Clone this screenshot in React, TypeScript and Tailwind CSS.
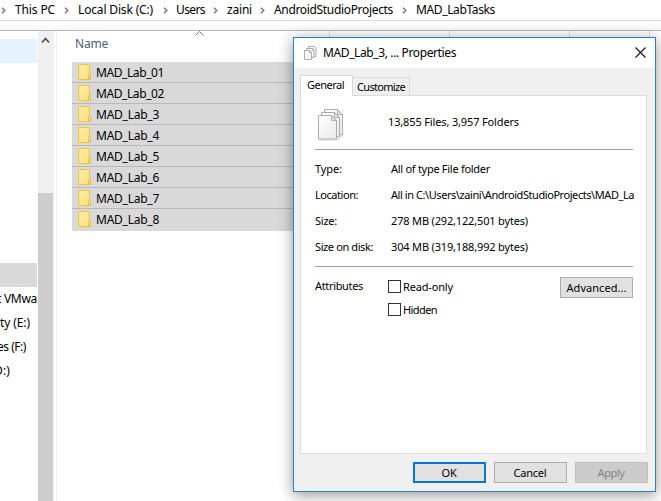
import { useLayoutEffect, useRef, useState } from 'react';

/* Single line of text whose letter spacing is adjusted to fill the given width. */
function Fit({ text, width, className = '' }: { text: string; width: number; className?: string }) {
  const ref = useRef<HTMLSpanElement>(null);
  const [spacing, setSpacing] = useState(0);
  useLayoutEffect(() => {
    if (ref.current) {
      const natural = ref.current.getBoundingClientRect().width;
      setSpacing((width - natural) / text.length);
    }
  }, [text, width]);
  return (
    <span ref={ref} className={`inline-block shrink-0 whitespace-pre ${className}`} style={{ letterSpacing: `${spacing}px` }}>
      {text}
    </span>
  );
}

function Crumb({ text, width, gap }: { text: string; width: number; gap: string }) {
  return (
    <div className={`flex shrink-0 items-center ${gap}`}>
      <svg width="5" height="7" viewBox="0 0 5 7" className="mt-px shrink-0" fill="none" stroke="#777" strokeWidth="1.4">
        <path d="M1 .7 3.8 3.5 1 6.3" />
      </svg>
      <Fit text={text} width={width} />
    </div>
  );
}

function Folder() {
  return (
    <svg width="14" height="16" viewBox="0 0 14 16" className="shrink-0">
      <defs>
        <linearGradient id="fold" x1="0" y1="0" x2="1" y2="1">
          <stop offset="0" stopColor="#ffeca6" />
          <stop offset="1" stopColor="#ffdf80" />
        </linearGradient>
      </defs>
      <path d="M.5.5h11v9h1v6H.5z" fill="url(#fold)" stroke="#edc541" />
      <path d="M10.500 15V10.500l1-1h1v5.500z" fill="#ffe79a" stroke="#e7bb38" />
    </svg>
  );
}

function SmallPages() {
  return (
    <svg width="13" height="14" viewBox="0 0 13 14" fill="#fafafa" stroke="#a3a3a3" strokeWidth=".9" className="mb-px shrink-0">
      <path d="M4.500.5h6l1.500 1.500v8.500h-7.500z" />
      <path d="M2.500 2.500h6l1.500 1.500v7.500H2.500z" />
      <path d="M.5 4.500h5l2 2v7h-7z" />
      <path d="M5.500 4.500v2h2M8.500 2.500v1.500h1.500" fill="none" />
    </svg>
  );
}

function Pages() {
  return (
    <svg width="26" height="32" viewBox="0 0 26 32" className="mt-[4px] shrink-0 overflow-visible">
      <defs>
        <linearGradient id="sheet" x1="0" y1="0" x2="1" y2="1">
          <stop offset="0" stopColor="#fff" />
          <stop offset="1" stopColor="#e9e9e9" />
        </linearGradient>
      </defs>
      <path d="M1 31h18l3.500-3 2.500-3" fill="none" stroke="#dedede" strokeWidth="1.500" />
      <g fill="url(#sheet)" stroke="#adadad">
        <path d="M6.500.5h13l5 5v20h-18z" />
        <path d="M3.500 3.500h13l5 5v19h-18z" />
        <path d="M.5 6.500h13l5 5v18.500H.5z" />
      </g>
      <path d="M19.500.5v5h5zM16.500 3.500v5h5zM13.500 6.500v5h5z" fill="#dedede" stroke="#a5a5a5" strokeWidth=".8" />
    </svg>
  );
}

const folders = ['MAD_Lab_01', 'MAD_Lab_02', 'MAD_Lab_3', 'MAD_Lab_4', 'MAD_Lab_5', 'MAD_Lab_6', 'MAD_Lab_7', 'MAD_Lab_8'];

const details: [string, number, string, number][] = [
  ['Type:', 27, 'All of type File folder', 99],
  ['Location:', 43, 'All in C:\\Users\\zaini\\AndroidStudioProjects\\MAD_La', 243],
  ['Size:', 22, '278 MB (292,122,501 bytes)', 137],
  ['Size on disk:', 58, '304 MB (319,188,992 bytes)', 137],
];

function Check({ label, width }: { label: string; width: number }) {
  return (
    <label className="flex h-[23px] items-center gap-[2px]">
      <span className="size-[13px] border border-[#333] bg-white" />
      <Fit text={label} width={width} />
    </label>
  );
}

function Properties() {
  return (
    <section className="absolute left-[293px] top-[37px] flex h-[455px] w-[363px] flex-col border border-[#2b7fc4] bg-[#f0f0f0] font-['Noto_Sans',sans-serif] text-[11px] leading-[15px] shadow-[0_3px_14px_rgba(0,0,0,0.42)]">
      <header className="flex h-[30px] shrink-0 items-center bg-white pl-[10px] pr-[9px] text-[12px]">
        <SmallPages />
        <Fit text="MAD_Lab_3, ... Properties" width={133} className="mb-px ml-[6px]" />
        <svg width="11" height="11" viewBox="0 0 11 11" className="mb-[2px] ml-auto" stroke="#111" strokeWidth="1.100">
          <path d="m.5.5 10 10M10.500.5l-10 10" />
        </svg>
      </header>
      <div className="mt-[7px] flex h-5 shrink-0 items-end pl-[6px]">
        <div className="z-10 -mb-px flex h-[21px] w-[53px] shrink-0 items-center border border-b-0 border-[#d9d9d9] bg-white pb-[3px] pl-[6px]">
          <Fit text="General" width={37} />
        </div>
        <div className="flex h-[18px] w-[57px] items-center border border-b-0 border-l-0 border-[#d9d9d9] pl-[4px]">
          <Fit text="Customize" width={48} />
        </div>
      </div>
      <div className="ml-[6px] flex h-[359px] w-[347px] shrink-0 flex-col border border-[#dcdcdc] bg-white pl-[14px] pr-[13px]">
        <div className="flex h-[54px] shrink-0 items-center border-b border-[#a0a0a0] pl-[3px]">
          <Pages />
          <Fit text="13,855 Files, 3,957 Folders" width={131} className="mb-[2px] ml-[44px]" />
        </div>
        <div className="flex h-[117px] shrink-0 flex-col border-b border-[#a0a0a0] pt-[5px]">
          {details.map(([label, lw, value, vw]) => (
            <div key={label} className="flex h-[26px] items-center">
              <div className="w-[76px] shrink-0"><Fit text={label} width={lw} /></div>
              <Fit text={value} width={vw} />
            </div>
          ))}
        </div>
        <div className="flex pt-[8px]">
          <div className="w-[73px] pt-[3px]"><Fit text="Attributes" width={48} /></div>
          <div>
            <Check label="Read-only" width={50} />
            <Check label="Hidden" width={34} />
          </div>
          <button className="ml-auto mt-[2px] flex h-[21px] w-[73px] items-center justify-center border border-[#adadad] bg-[#e1e1e1]">
            <Fit text="Advanced..." width={60} />
          </button>
        </div>
      </div>
      <footer className="flex gap-2 pl-[119px] pt-[8px]">
        <button className="flex h-[21px] w-[73px] items-center justify-center border-2 border-[#0078d7] bg-[#e1e1e1] pr-px"><Fit text="OK" width={15} /></button>
        <button className="flex h-[21px] w-[73px] items-center justify-center border border-[#adadad] bg-[#e1e1e1] pr-px"><Fit text="Cancel" width={33} /></button>
        <button className="flex h-[21px] w-[73px] items-center justify-center border border-[#bfbfbf] bg-[#ccc] pr-px text-[#838383]"><Fit text="Apply" width={27} /></button>
      </footer>
    </section>
  );
}

export default function App() {
  return (
    <main className="relative flex h-[501px] w-[661px] flex-col overflow-hidden bg-white font-['Noto_Sans',sans-serif] text-[12px] leading-4 text-black">
      <nav className="flex h-[21px] shrink-0 items-center border-b border-[#d9d9d9] pl-px">
        <Crumb text="This PC" width={40} gap="gap-[9px] mr-[9px]" />
        <Crumb text="Local Disk (C:)" width={75} gap="gap-[9px] mr-[10px]" />
        <Crumb text="Users" width={29} gap="gap-[8px] mr-[8px]" />
        <Crumb text="zaini" width={25} gap="gap-[9px] mr-[8px]" />
        <Crumb text="AndroidStudioProjects" width={119} gap="gap-[9px] mr-[9px]" />
        <Crumb text="MAD_LabTasks" width={79} gap="gap-[9px]" />
      </nav>
      <div className="h-[10px] shrink-0 border-b border-[#b5b5b5] bg-linear-to-b from-white to-[#f8f8f8]" />
      <div className="flex min-h-0 flex-1">
        <aside className="flex w-[37px] shrink-0 flex-col overflow-hidden pt-2">
          <div className="h-6 shrink-0 bg-[#e5f3ff]" />
          <div className="mt-[200px] h-6 shrink-0 bg-[#d9d9d9]" />
          <div className="flex h-6 items-center justify-end"><Fit text="t VMwa" width={40} /></div>
          <div className="flex h-6 items-center"><Fit text="ty (E:)" width={30} /></div>
          <div className="flex h-6 items-center justify-end pr-[11px]"><Fit text="es (F:)" width={29} /></div>
          <div className="flex h-6 items-center justify-end pr-[27px]"><Fit text="D:)" width={16} /></div>
        </aside>
        <div className="ml-px flex w-4 shrink-0 flex-col bg-[#f0f0f0]">
          <svg width="15" height="162" viewBox="0 0 15 162" fill="none" stroke="#555" strokeWidth="1.800">
            <path d="m4 11.500 3.500-4 3.500 4" />
          </svg>
          <div className="w-[15px] flex-1 bg-[#cdcdcd]" />
        </div>
        <div className="ml-[2px] flex-1 border-l border-[#f0f0f0]">
          <div className="flex h-[31px] pl-[18px] text-[#4c607a]">
            <div className="w-[120px] pt-[5px]"><Fit text="Name" width={33} /></div>
            <svg width="9" height="6" viewBox="0 0 9 6" fill="none" stroke="#777"><path d="M.5 4.500 4.500.5l4 4" /></svg>
            <div className="ml-[125px] flex h-5">
              <div className="w-[120px] border-l border-[#ddd]" />
              <div className="w-[120px] border-l border-[#ddd]" />
              <div className="w-[81px] border-x border-[#ddd]" />
            </div>
          </div>
          <div className="ml-[15px] w-[560px] bg-[#d9d9d9]">
            {folders.map((name, i) => (
              <div key={name} className={`flex items-center gap-[4px] pl-[6px] ${i === 7 ? 'h-[22px] pb-[2px]' : 'h-[21px] border-b border-[#b9b9b9]'}`}>
                <Folder />
                <Fit text={name} width={i < 2 ? 68 : 63} className="mt-px" />
              </div>
            ))}
          </div>
        </div>
      </div>
      <Properties />
    </main>
  );
}
